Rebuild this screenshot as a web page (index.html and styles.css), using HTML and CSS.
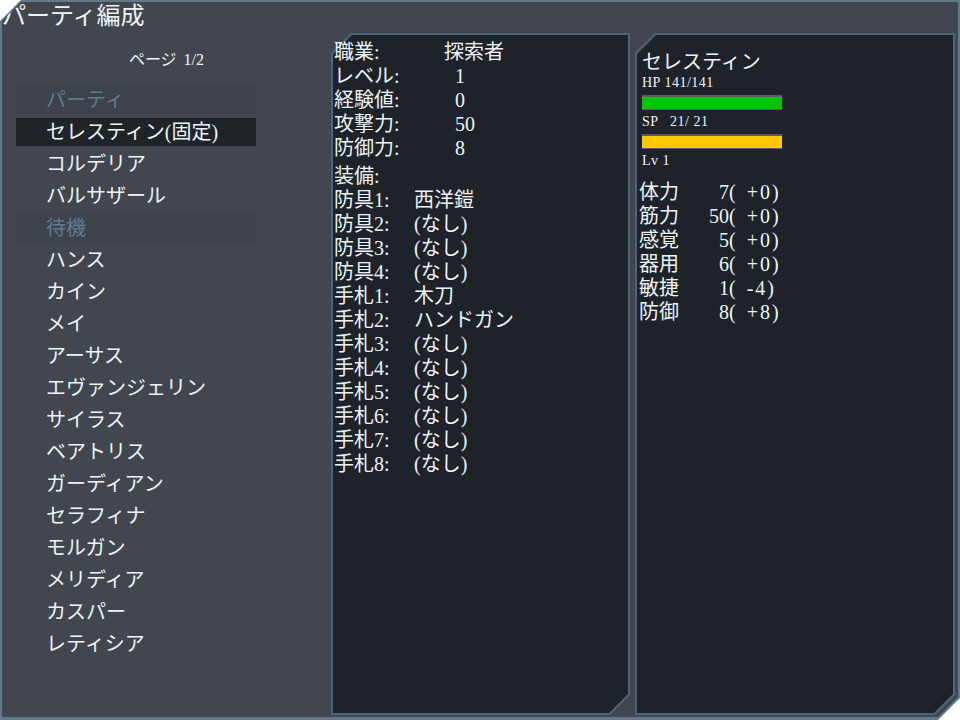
FILE: index.html
```html
<!DOCTYPE html>
<html lang="ja">
<head>
<meta charset="utf-8">
<title>パーティ編成</title>
<link rel="stylesheet" href="styles.css">
</head>
<body>
<div class="window">
  <div class="window-inner">
    <aside class="left">
      <h1 class="title">パーティ編成</h1>
      <div class="page">ページ 1/2</div>
      <ul class="list">
        <li class="item head">パーティ</li>
        <li class="item sel">セレスティン(固定)</li>
        <li class="item">コルデリア</li>
        <li class="item">バルサザール</li>
        <li class="item head">待機</li>
        <li class="item">ハンス</li>
        <li class="item">カイン</li>
        <li class="item">メイ</li>
        <li class="item">アーサス</li>
        <li class="item">エヴァンジェリン</li>
        <li class="item">サイラス</li>
        <li class="item">ベアトリス</li>
        <li class="item">ガーディアン</li>
        <li class="item">セラフィナ</li>
        <li class="item">モルガン</li>
        <li class="item">メリディア</li>
        <li class="item">カスパー</li>
        <li class="item">レティシア</li>
      </ul>
    </aside>

    <section class="panel mid">
      <div class="panel-inner mid-inner">
        <div class="row"><span class="lbl">職業:</span><span class="val job">探索者</span></div>
        <div class="row"><span class="lbl">レベル:</span><span class="val num">1</span></div>
        <div class="row"><span class="lbl">経験値:</span><span class="val num">0</span></div>
        <div class="row"><span class="lbl">攻撃力:</span><span class="val num">50</span></div>
        <div class="row"><span class="lbl">防御力:</span><span class="val num">8</span></div>
        <div class="row equip-head"><span class="lbl">装備:</span></div>
        <div class="row"><span class="lbl eq">防具1:</span><span class="val">西洋鎧</span></div>
        <div class="row"><span class="lbl eq">防具2:</span><span class="val">(なし)</span></div>
        <div class="row"><span class="lbl eq">防具3:</span><span class="val">(なし)</span></div>
        <div class="row"><span class="lbl eq">防具4:</span><span class="val">(なし)</span></div>
        <div class="row"><span class="lbl eq">手札1:</span><span class="val">木刀</span></div>
        <div class="row"><span class="lbl eq">手札2:</span><span class="val">ハンドガン</span></div>
        <div class="row"><span class="lbl eq">手札3:</span><span class="val">(なし)</span></div>
        <div class="row"><span class="lbl eq">手札4:</span><span class="val">(なし)</span></div>
        <div class="row"><span class="lbl eq">手札5:</span><span class="val">(なし)</span></div>
        <div class="row"><span class="lbl eq">手札6:</span><span class="val">(なし)</span></div>
        <div class="row"><span class="lbl eq">手札7:</span><span class="val">(なし)</span></div>
        <div class="row"><span class="lbl eq">手札8:</span><span class="val">(なし)</span></div>
      </div>
    </section>

    <section class="panel right">
      <div class="panel-inner right-inner">
        <div class="name">セレスティン</div>
        <div class="small">HP 141/141</div>
        <div class="bar"><div class="fill hp" style="width:100%"></div></div>
        <div class="small">SP   21/ 21</div>
        <div class="bar"><div class="fill sp" style="width:100%"></div></div>
        <div class="small lv">Lv 1</div>
        <div class="stats">
          <div class="stat"><span class="sl">体力</span><span class="sn">7</span><span class="sm">( +0)</span></div>
          <div class="stat"><span class="sl">筋力</span><span class="sn">50</span><span class="sm">( +0)</span></div>
          <div class="stat"><span class="sl">感覚</span><span class="sn">5</span><span class="sm">( +0)</span></div>
          <div class="stat"><span class="sl">器用</span><span class="sn">6</span><span class="sm">( +0)</span></div>
          <div class="stat"><span class="sl">敏捷</span><span class="sn">1</span><span class="sm">( -4)</span></div>
          <div class="stat"><span class="sl">防御</span><span class="sn">8</span><span class="sm">( +8)</span></div>
        </div>
      </div>
    </section>
  </div>
</div>
</body>
</html>
```
FILE: styles.css
```css
* { box-sizing: border-box; }
html, body { margin: 0; padding: 0; background: #ffffff; }
body {
  font-family: "Liberation Serif", "Noto Sans CJK JP", serif;
  color: #eef3f7;
}
.window {
  width: 960px;
  height: 720px;
  background: #62798a;
  padding: 2px 2px 3px 2px;
  clip-path: polygon(21px 0, 100% 0, 100% calc(100% - 22px), calc(100% - 22px) 100%, 0 100%, 0 21px);
}
.window-inner {
  width: 100%;
  height: 100%;
  background: #41464f;
  display: flex;
  clip-path: polygon(19px 0, 100% 0, 100% calc(100% - 20px), calc(100% - 20px) 100%, 0 100%, 0 19px);
}
.left {
  width: 329px;
  flex: none;
}
.title {
  margin: 0;
  font-size: 24px;
  line-height: 28px;
  font-weight: normal;
  padding-left: 0;
}
.page {
  margin-top: 20px;
  font-size: 16px;
  line-height: 20px;
  text-align: center;
  word-spacing: 3px;
}
.list {
  list-style: none;
  margin: 16px 0 0 14px;
  padding: 0;
}
.item {
  width: 240px;
  height: 28px;
  line-height: 28px;
  margin-bottom: 4px;
  padding-left: 30px;
  font-size: 20px;
  white-space: nowrap;
}
.item.head {
  background: #3e434b;
  color: #5d7c92;
}
.item.sel {
  background: #1f2429;
}
.panel {
  position: relative;
  margin-top: 31px;
  margin-bottom: 2px;
  padding: 2px;
}
.panel::before,
.panel::after {
  content: "";
  position: absolute;
  z-index: 0;
}
.panel::before {
  inset: 0;
  background: #4c6475;
  clip-path: polygon(20px 0, 100% 0, 100% calc(100% - 20px), calc(100% - 20px) 100%, 0 100%, 0 20px);
}
.panel::after {
  inset: 2px;
  background: #1e232a;
  clip-path: polygon(19px 0, 100% 0, 100% calc(100% - 19px), calc(100% - 19px) 100%, 0 100%, 0 19px);
}
.panel-inner {
  position: relative;
  z-index: 1;
  height: 100%;
}
.mid { width: 299px; flex: none; }
.right { width: 320px; flex: none; margin-left: 5px; }
.mid-inner {
  padding: 5px 0 0 1px;
  font-size: 20px;
  line-height: 24px;
}
.row { display: flex; white-space: nowrap; }
.lbl { width: 110px; flex: none; }
.lbl.eq { width: 80px; }
.val.num { padding-left: 11px; }
.equip-head { margin-top: 4px; }
.right-inner {
  padding: 14px 0 0 5px;
}
.name {
  font-size: 20px;
  line-height: 26px;
}
.small {
  font-size: 14px;
  line-height: 16px;
  white-space: pre;
  letter-spacing: 0.5px;
}
.bar {
  width: 140px;
  height: 15px;
  margin: 4px 0 4px;
  background: #5a5d62;
  padding: 2px 0 1px;
}
.fill { height: 100%; }
.fill.hp { background: #00c400; }
.fill.sp { background: #ffc800; }
.stats {
  margin-top: 11px;
  margin-left: -3px;
  font-size: 20px;
  line-height: 24px;
}
.stat { display: flex; white-space: pre; }
.sl { width: 50px; }
.sn { width: 40px; text-align: right; }
.sm { white-space: pre; letter-spacing: 2px; word-spacing: 2px; }
```
